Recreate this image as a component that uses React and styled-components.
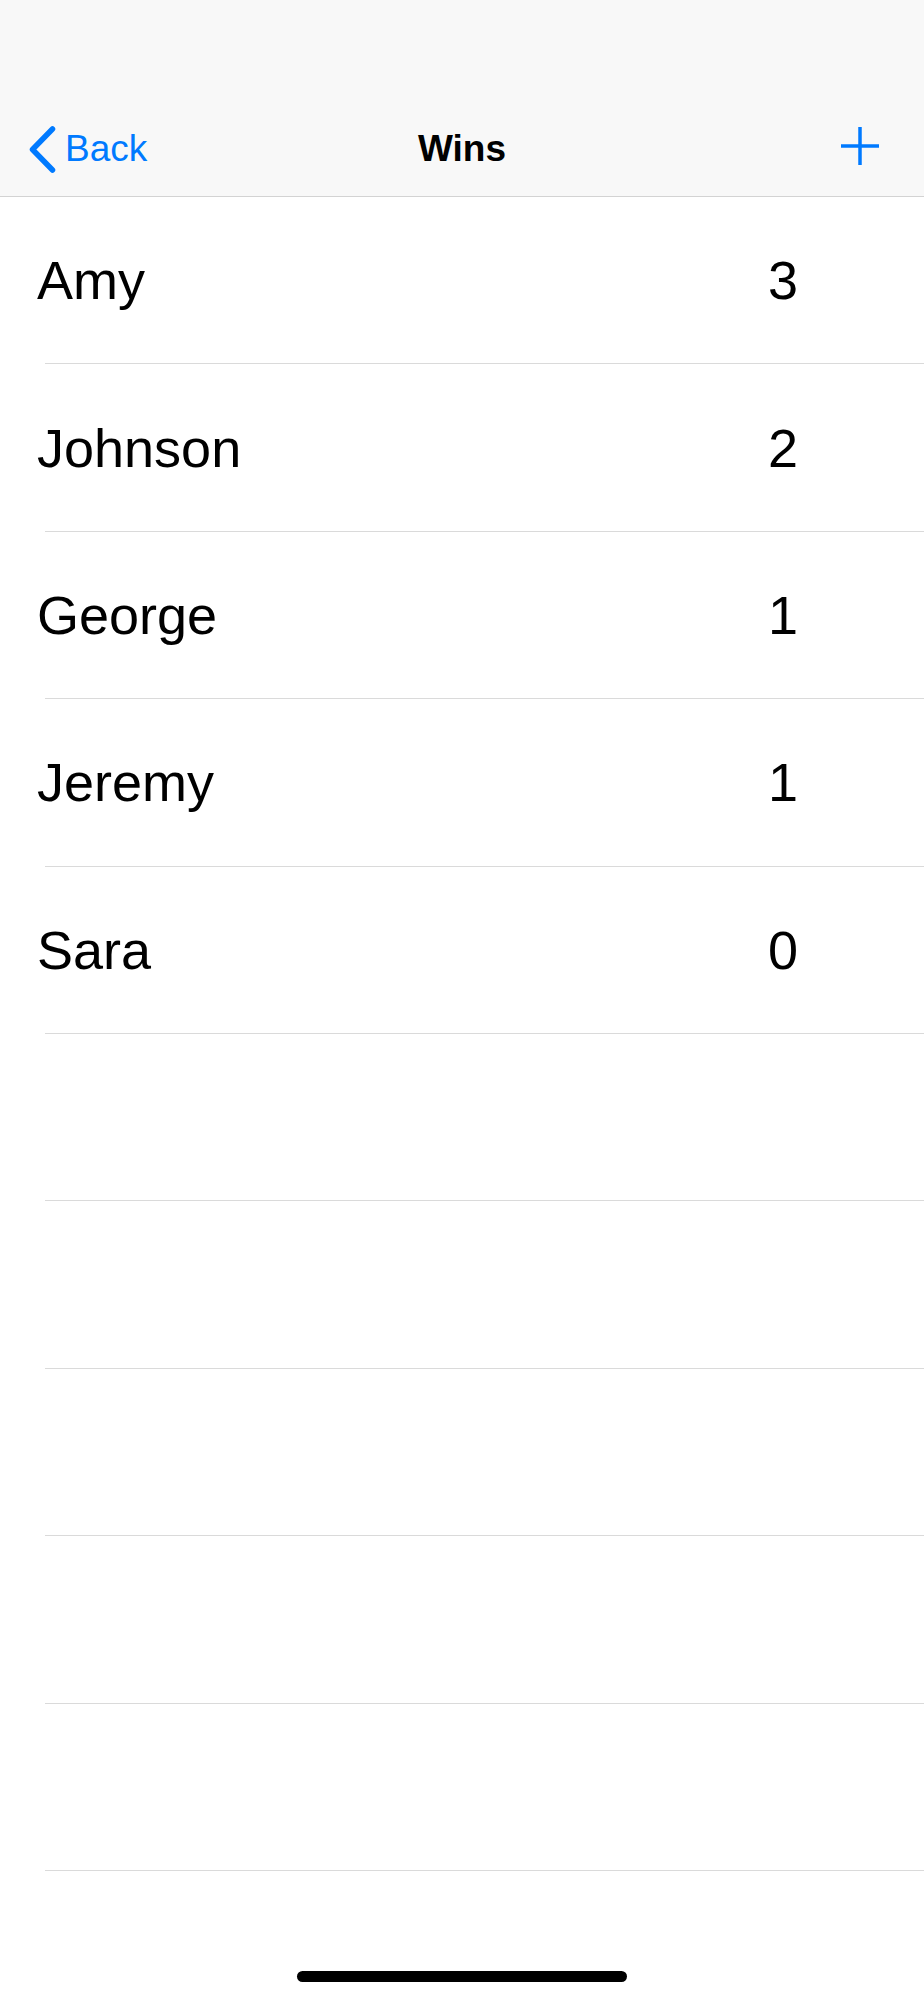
import React from "react";
import styled, { createGlobalStyle } from "styled-components";

const GlobalStyle = createGlobalStyle`
  html, body {
    margin: 0;
    padding: 0;
    background: #ffffff;
  }
  body {
    font-family: "Liberation Sans", Arial, sans-serif;
    color: #000;
  }
  * { box-sizing: border-box; }
`;

const Screen = styled.div`
  position: relative;
  width: 924px;
  min-height: 2000px;
  background: #fff;
  display: flex;
  flex-direction: column;
  overflow: hidden;
`;

const NavBar = styled.header`
  height: 197px;
  padding-top: 102px;
  background: #f8f8f8;
  border-bottom: 1px solid #d3d3d3;
`;

const NavRow = styled.div`
  height: 94px;
  display: grid;
  grid-template-columns: 1fr auto 1fr;
  align-items: center;
`;

const BackButton = styled.button`
  justify-self: start;
  display: flex;
  align-items: center;
  gap: 9px;
  padding: 0 0 0 29px;
  margin: 0;
  border: 0;
  background: none;
  color: #007aff;
  font-family: "Liberation Sans", Arial, sans-serif;
  font-size: 37px;
  cursor: pointer;
`;

const Title = styled.h1`
  margin: 0;
  font-size: 37px;
  font-weight: 700;
  color: #000;
`;

const AddButton = styled.button`
  justify-self: end;
  display: flex;
  align-items: center;
  padding: 0 45px 6px 0;
  margin: 0;
  border: 0;
  background: none;
  cursor: pointer;
`;

const List = styled.ul`
  list-style: none;
  margin: 0;
  padding: 0;
  display: flex;
  flex-direction: column;
`;

const Row = styled.li`
  height: 167.4px;
  display: flex;
  flex-direction: column;
`;

const RowContent = styled.div`
  flex: 1;
  display: flex;
  align-items: center;
  justify-content: space-between;
  padding: 0 126px 0 37px;
  font-size: 54px;
  color: #000;
`;

const Name = styled.span``;

const Score = styled.span`
  font-variant-numeric: tabular-nums;
  text-align: right;
`;

const Separator = styled.div`
  height: 1px;
  margin-left: 45px;
  background: #dadada;
`;

const HomeIndicator = styled.div`
  position: absolute;
  left: 297px;
  bottom: 18px;
  width: 330px;
  height: 11px;
  border-radius: 6px;
  background: #000;
`;

const ChevronIcon = () => (
  <svg width="27" height="47" viewBox="0 0 27 47" aria-hidden="true">
    <polyline
      points="23.5,3 3.5,23.5 23.5,44"
      fill="none"
      stroke="#007aff"
      strokeWidth="5.5"
      strokeLinecap="round"
      strokeLinejoin="round"
    />
  </svg>
);

const PlusIcon = () => (
  <svg width="38" height="38" viewBox="0 0 38 38" aria-hidden="true">
    <path d="M19 0 V38 M0 19 H38" stroke="#007aff" strokeWidth="3.5" fill="none" />
  </svg>
);

const players = [
  { name: "Amy", wins: 3 },
  { name: "Johnson", wins: 2 },
  { name: "George", wins: 1 },
  { name: "Jeremy", wins: 1 },
  { name: "Sara", wins: 0 },
];

const rows = [...players, ...Array.from({ length: 5 }, () => null)];

export default function App() {
  return (
    <>
      <GlobalStyle />
      <Screen>
        <NavBar>
          <NavRow>
            <BackButton>
              <ChevronIcon />
              <span>Back</span>
            </BackButton>
            <Title>Wins</Title>
            <AddButton aria-label="Add">
              <PlusIcon />
            </AddButton>
          </NavRow>
        </NavBar>
        <List>
          {rows.map((p, i) => (
            <Row key={i}>
              <RowContent>
                {p && <Name>{p.name}</Name>}
                {p && <Score>{p.wins}</Score>}
              </RowContent>
              <Separator />
            </Row>
          ))}
        </List>
        <HomeIndicator />
      </Screen>
    </>
  );
}
